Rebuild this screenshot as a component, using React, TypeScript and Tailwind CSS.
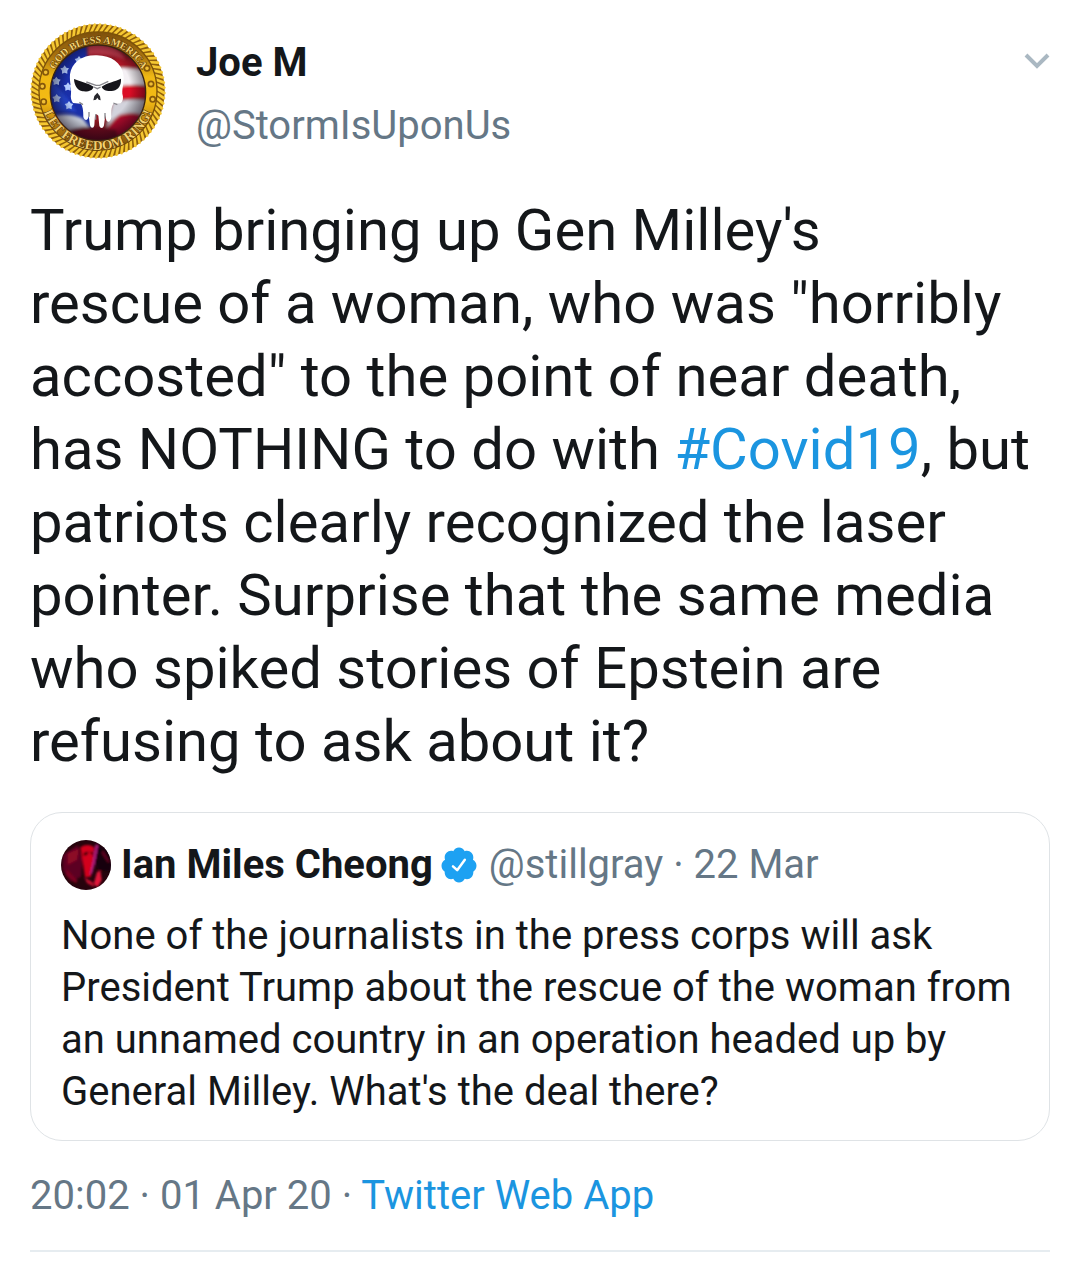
const studs = [
  [78, 172], [68, 214], [72, 260],
  [382, 160], [394, 207], [399, 253],
];

const stars = [
  [135, 164], [110, 198], [145, 215], [111, 250], [148, 271], [178, 136],
];

const ropeStrands = Array.from({ length: 80 }, (_, i) => i * 4.5);

function SealAvatar() {
  return (
    <svg viewBox="31 24 408 408" className="size-34 shrink-0" role="img" aria-label="Joe M avatar">
      <defs>
        <linearGradient id="band" x1="0" y1="0" x2="0" y2="1">
          <stop offset="0" stopColor="#7d500c" />
          <stop offset="0.2" stopColor="#a8720e" />
          <stop offset="0.38" stopColor="#f0b814" />
          <stop offset="0.58" stopColor="#f3bb14" />
          <stop offset="0.76" stopColor="#bf840f" />
          <stop offset="1" stopColor="#7a4d0c" />
        </linearGradient>
        <radialGradient id="shade" cx="0.5" cy="0.45" r="0.56">
          <stop offset="0.6" stopColor="#000" stopOpacity="0" />
          <stop offset="1" stopColor="#100010" stopOpacity="0.65" />
        </radialGradient>
        <clipPath id="disc"><circle cx="235" cy="233" r="143" /></clipPath>
        <filter id="soft"><feGaussianBlur stdDeviation="4" /></filter>
        <filter id="starSoft"><feGaussianBlur stdDeviation="1.5" /></filter>
        <path id="arcTop" d="M88 232A148 148 0 0 1 384 232" />
        <path id="arcBottom" d="M62 232A173 173 0 0 0 408 232" />
      </defs>
      <circle cx="235" cy="228" r="200" fill="#8f5f0c" />
      {ropeStrands.map((angle) => (
        <path key={angle} transform={`rotate(${angle} 235 228)`} d="M229 50L241 29" stroke="#f5c832" strokeWidth="8" strokeLinecap="round" />
      ))}
      <circle cx="235" cy="228" r="177" fill="url(#band)" stroke="#7c5209" strokeWidth="4" />
      <g clipPath="url(#disc)">
        <rect x="85" y="83" width="300" height="300" fill="#1a2fa8" />
        <g filter="url(#soft)">
          <path d="M200 80L400 80L400 390L220 390Z" fill="#8e1424" />
          <path d="M205 90Q260 80 300 110L320 135Q260 110 205 118Z" fill="#c33a4d" />
          <path d="M290 125Q330 140 390 130L390 160Q340 172 290 152Z" fill="#b01427" />
          <path d="M290 160Q330 155 390 170L390 212Q340 205 290 215Z" fill="#f4f0f4" />
          <path d="M290 216Q340 204 390 218L390 252Q340 244 280 256Z" fill="#dc0f28" />
          <path d="M280 262Q330 248 390 258L370 300Q300 290 260 340Z" fill="#d3d3dc" />
          <path d="M300 300Q340 290 370 300L330 360L250 370Q270 320 300 300Z" fill="#c80f30" />
          <path d="M85 306Q150 290 190 312L220 350L150 352Z" fill="#e4ebf8" />
          <path d="M140 350Q190 325 290 345L300 390L150 390Z" fill="#7c0f24" />
          <path d="M90 190Q130 230 170 290L100 290Z" fill="#2747d0" />
        </g>
        <g filter="url(#starSoft)">
          {stars.map(([x, y]) => (
            <path key={x} transform={`translate(${x} ${y})`} fill="#b4ccff" d="M0-13L5-6L13-4L8 3L8 12L0 9L-8 12L-8 3L-13-4L-5-6Z" />
          ))}
        </g>
        <circle cx="235" cy="233" r="143" fill="url(#shade)" />
      </g>
      <circle cx="235" cy="233" r="143" fill="none" stroke="#3a2410" strokeWidth="4" />
      <path
        fill="#fff"
        d="M232 121C188 119 156 142 151 178C149 200 156 217 154 236C152 247 155 257 160 264L184 266C189 273 191 286 191 306C194 316 202 318 205 310L207 302L211 331C214 341 222 341 224 331L226 301L231 298L236 302L239 332C242 341 251 341 253 331L257 301L260 316C265 325 274 318 275 305C274 286 276 275 281 267L303 265C310 258 312 248 308 236C307 217 315 199 311 178C305 143 275 122 232 121Z"
      />
      <path fill="#15151b" d="M163 192C182 200 205 204 222 215C219 226 207 231 189 229C173 226 164 212 163 192Z" />
      <path fill="#15151b" d="M304 191C285 200 262 203 246 215C249 225 263 230 281 227C297 224 305 210 304 191Z" />
      <path fill="#27272c" d="M233 233L241 244L243 256L237 254L233 248L229 254L221 256L224 243Z" />
      <path stroke="#88888e" strokeWidth="4" fill="none" d="M200 201L229 211L240 211L266 199M223 216L233 221L243 216M228 298V314M256 294V311M208 291V305M281 264L293 269M179 262L190 269" />
      {studs.map(([x, y]) => (
        <circle key={x} cx={x} cy={y} r="8" fill="#f0bf35" stroke="#86580a" strokeWidth="5" />
      ))}
      <g fill="#f3d070" stroke="#4f3107" strokeWidth="3" paintOrder="stroke" fontFamily="Liberation Serif, serif" fontWeight="700" textAnchor="middle">
        <text fontSize="30"><textPath href="#arcTop" startOffset="50%">GOD BLESS AMERICA</textPath></text>
        <text fontSize="40"><textPath href="#arcBottom" startOffset="50%">LET FREEDOM RING!</textPath></text>
      </g>
    </svg>
  );
}

function RedAvatar() {
  return (
    <svg viewBox="0 0 150 150" className="size-[50px] shrink-0" role="img" aria-label="Ian Miles Cheong avatar">
      <defs>
        <clipPath id="round"><circle cx="75" cy="75" r="75" /></clipPath>
        <filter id="haze"><feGaussianBlur stdDeviation="3" /></filter>
      </defs>
      <g clipPath="url(#round)">
        <rect width="150" height="150" fill="#26030c" />
        <g filter="url(#haze)">
          <path d="M5 45L50 15L65 60L60 110L30 125L5 90Z" fill="#5b0520" />
          <path d="M20 40L55 25L48 60L20 75Z" fill="#8c0727" />
          <path d="M58 22Q80 8 100 22L96 60L90 110L72 112L66 70Z" fill="#d3061f" />
          <path d="M68 38L82 34L80 44L68 48ZM86 34L98 38L92 46Z" fill="#4a0210" />
          <path d="M104 12L96 60L86 105L94 100L104 60L112 16Z" fill="#b21d80" />
          <path d="M112 15L150 30L150 95L112 90L102 70Z" fill="#180108" />
          <path d="M108 96L118 92L122 120L110 142L98 132Z" fill="#e1193a" />
          <path d="M70 112L95 126L100 142L78 130Z" fill="#bb0a2d" />
          <path d="M18 88L50 122L44 130L14 105Z" fill="#7b0620" />
          <path d="M126 30L146 65L141 68L122 40Z" fill="#610421" />
        </g>
      </g>
    </svg>
  );
}

function VerifiedBadge() {
  return (
    <svg viewBox="0 0 24 24" className="mx-1.5 size-10 shrink-0" role="img" aria-label="Verified account">
      <path
        fill="#1da1f2"
        d="M22.5 12.5c0-1.58-.875-2.95-2.148-3.6.154-.435.238-.905.238-1.4 0-2.21-1.71-3.998-3.818-3.998-.47 0-.92.084-1.336.25C14.818 2.415 13.51 1.5 12 1.5s-2.816.917-3.437 2.25c-.415-.165-.866-.25-1.336-.25-2.11 0-3.818 1.79-3.818 4 0 .494.083.964.237 1.4-1.272.65-2.147 2.018-2.147 3.6 0 1.495.782 2.798 1.942 3.486-.02.17-.032.34-.032.514 0 2.21 1.708 4 3.818 4 .47 0 .92-.086 1.335-.25.62 1.334 1.926 2.25 3.437 2.25 1.512 0 2.818-.916 3.437-2.25.415.163.865.248 1.336.248 2.11 0 3.818-1.79 3.818-4 0-.174-.012-.344-.033-.513 1.158-.687 1.943-1.99 1.943-3.484z"
      />
      <path fill="none" stroke="#fff" strokeWidth="1.5" strokeLinecap="round" strokeLinejoin="round" d="M8.4 12.8L10.9 15.1L15.5 8.9" />
    </svg>
  );
}

const bodyLines = [
  "Trump bringing up Gen Milley's",
  'rescue of a woman, who was "horribly',
  'accosted" to the point of near death,',
];

const bodyTail = [
  'patriots clearly recognized the laser',
  'pointer. Surprise that the same media',
  'who spiked stories of Epstein are',
  'refusing to ask about it?',
];

export default function App() {
  return (
    <main className="min-h-screen bg-white px-[30px] pt-[23px] font-['Roboto',sans-serif] text-[40px] leading-[52px] text-[#14171a]">
      <article className="border-b-2 border-[#e6ecf0] pb-7">
        <header className="flex items-start">
          <SealAvatar />
          <div className="ml-[30px] min-w-0 flex-1 pt-[14px]">
            <h1 className="font-bold">Joe M</h1>
            <a href="#profile" className="mt-[11px] block text-[#657786]">@StormIsUponUs</a>
          </div>
          <button type="button" aria-label="More options" className="mt-6">
            <svg viewBox="0 0 26 26" className="size-[26px]" fill="none" stroke="#aab8c2" strokeWidth="4">
              <path d="M2 8L13 19L24 8" />
            </svg>
          </button>
        </header>

        <p className="mt-[35px] text-[58px] leading-[73px]">
          {bodyLines.map((line) => (
            <span key={line} className="block">{line}</span>
          ))}
          <span className="block">
            has NOTHING to do with <a href="#covid19" className="text-[#1b95e0]">#Covid19</a>, but
          </span>
          {bodyTail.map((line) => (
            <span key={line} className="block">{line}</span>
          ))}
        </p>

        <section className="mt-[34px] rounded-[32px] border border-[#dfe3e6] px-[30px] pt-[26px] pb-[22px]">
          <div className="flex items-center whitespace-nowrap">
            <RedAvatar />
            <h2 className="ml-[10px] font-bold">Ian Miles Cheong</h2>
            <VerifiedBadge />
            <span className="ml-1 text-[#657786]">@stillgray · 22 Mar</span>
          </div>
          <p className="mt-[19px]">
            <span className="block">None of the journalists in the press corps will ask</span>
            <span className="block">President Trump about the rescue of the woman from</span>
            <span className="block">an unnamed country in an operation headed up by</span>
            <span className="block">General Milley. What's the deal there?</span>
          </p>
        </section>

        <footer className="mt-[29px] text-[#657786]">
          20:02 · 01 Apr 20 · <a href="#source" className="text-[#1b95e0]">Twitter Web App</a>
        </footer>
      </article>
    </main>
  );
}
